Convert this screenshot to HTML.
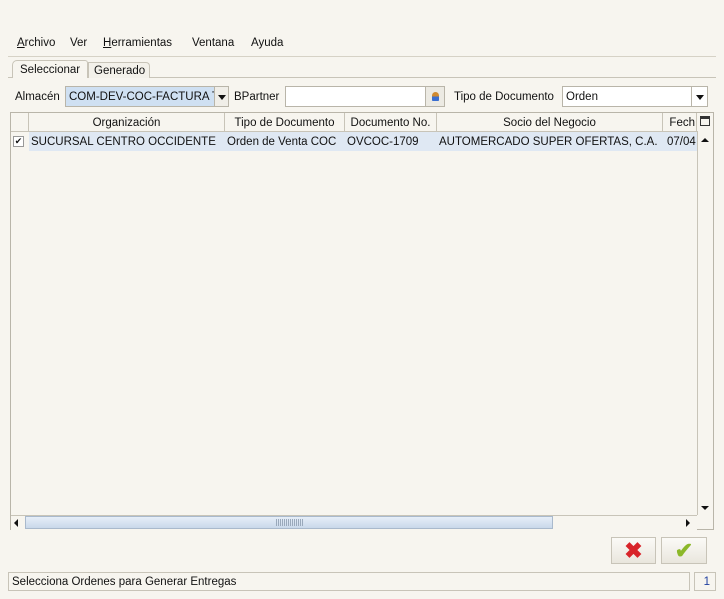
<!DOCTYPE html>
<html><head><meta charset="utf-8"><style>
*{box-sizing:border-box;margin:0;padding:0}
body{width:724px;height:599px;background:#f7f5ef;font-family:"Liberation Sans",sans-serif;font-size:11.5px;line-height:16px;color:#111;position:relative;overflow:hidden}
.a{position:absolute;white-space:nowrap}
.hdr{position:absolute;top:113px;height:19px;border-right:1px solid #c8c4b8;border-bottom:1px solid #c8c4b8;text-align:center;line-height:20px;background:#f7f5ef}
.cell{position:absolute;top:132px;height:19px;line-height:19px;background:#dfe8f3}
</style></head><body>
<div class="a" style="left:8px;top:30px;width:708px;height:27px;border-bottom:1px solid #d6d2c6"></div>
<div class="a" style="left:17px;top:35px"><u>A</u>rchivo</div>
<div class="a" style="left:70px;top:35px">Ver</div>
<div class="a" style="left:103px;top:35px"><u>H</u>erramientas</div>
<div class="a" style="left:192px;top:35px">Ventana</div>
<div class="a" style="left:251px;top:35px">Ayuda</div>
<!-- tabs -->
<div class="a" style="left:8px;top:77px;width:708px;height:1px;background:#c8c4b8"></div>
<div class="a" style="left:12px;top:60px;width:76px;height:18px;border:1px solid #c8c4b8;border-bottom:none;border-radius:5px 3px 0 0;background:#f7f5ef;padding:1px 0 0 7px">Seleccionar</div>
<div class="a" style="left:88px;top:62px;width:62px;height:16px;border:1px solid #c8c4b8;border-bottom:none;border-radius:0 4px 0 0;background:#f3f1ea;padding:0 0 0 5px">Generado</div>
<!-- filters -->
<div class="a" style="left:15px;top:89px">Almacén</div>
<div class="a" style="left:65px;top:86px;width:150px;height:21px;border:1px solid #b9b5a9;background:#cfe0f2;padding:2px 0 0 3px;overflow:hidden">COM-DEV-COC-FACTURA T</div>
<div class="a" style="left:214px;top:86px;width:15px;height:21px;border:1px solid #b9b5a9;background:#f0eee8"><div style="margin:8px auto 0;width:0;height:0;border-left:4px solid transparent;border-right:4px solid transparent;border-top:5px solid #111"></div></div>
<div class="a" style="left:234px;top:89px">BPartner</div>
<div class="a" style="left:285px;top:86px;width:141px;height:21px;border:1px solid #b9b5a9;background:#fff"></div>
<div class="a" style="left:425px;top:86px;width:20px;height:21px;border:1px solid #b9b5a9;background:#eceae3"><div style="position:absolute;left:6px;top:5px;width:7px;height:9px;border-radius:4px 4px 1px 1px;background:linear-gradient(#d08a30 50%,#3a6ed0 50%)"></div></div>
<div class="a" style="left:454px;top:89px">Tipo de Documento</div>
<div class="a" style="left:562px;top:86px;width:130px;height:21px;border:1px solid #b9b5a9;background:#fff;padding:2px 0 0 3px">Orden</div>
<div class="a" style="left:691px;top:86px;width:17px;height:21px;border:1px solid #b9b5a9;background:#fff"><div style="margin:8px auto 0;width:0;height:0;border-left:4px solid transparent;border-right:4px solid transparent;border-top:5px solid #111"></div></div>
<!-- table -->
<div class="a" style="left:10px;top:112px;width:704px;height:418px;border:1px solid #b9b5a9;background:#f7f5ef"></div>
<div class="hdr" style="left:11px;width:18px"></div>
<div class="hdr" style="left:29px;width:196px">Organización</div>
<div class="hdr" style="left:225px;width:120px">Tipo de Documento</div>
<div class="hdr" style="left:345px;width:92px">Documento No.</div>
<div class="hdr" style="left:437px;width:226px">Socio del Negocio</div>
<div class="hdr" style="left:663px;width:34px;text-align:right;padding-right:1px;overflow:hidden">Fech</div>
<div class="a" style="left:700px;top:116px;width:10px;height:10px;border:1px solid #333;border-top-width:3px"></div>
<div class="a" style="left:13px;top:136px;width:11px;height:11px;border:1px solid #999;background:#fff;font-size:9px;line-height:9px;text-align:center">&#10004;</div>
<div class="cell" style="left:29px;width:668px"></div>
<div class="a" style="left:31px;top:134px">SUCURSAL CENTRO OCCIDENTE</div>
<div class="a" style="left:227px;top:134px">Orden de Venta COC</div>
<div class="a" style="left:347px;top:134px">OVCOC-1709</div>
<div class="a" style="left:439px;top:134px">AUTOMERCADO SUPER OFERTAS, C.A.</div>
<div class="a" style="left:667px;top:134px">07/04</div>
<!-- vscroll -->
<div class="a" style="left:697px;top:131px;width:16px;height:384px;border-left:1px solid #c8c4b8;background:#f7f5ef"></div>
<div class="a" style="left:701px;top:138px;width:0;height:0;border-left:4px solid transparent;border-right:4px solid transparent;border-bottom:4px solid #111"></div>
<div class="a" style="left:701px;top:506px;width:0;height:0;border-left:4px solid transparent;border-right:4px solid transparent;border-top:4px solid #111"></div>
<!-- hscroll -->
<div class="a" style="left:11px;top:515px;width:686px;height:15px;border-top:1px solid #c8c4b8;background:#f7f5ef"></div>
<div class="a" style="left:14px;top:519px;width:0;height:0;border-top:4px solid transparent;border-bottom:4px solid transparent;border-right:4px solid #111"></div>
<div class="a" style="left:25px;top:516px;width:528px;height:13px;border:1px solid #a9b9cc;background:linear-gradient(#e6eef8,#c9d8ea)"></div>
<div class="a" style="left:276px;top:519px;width:28px;height:7px;background:repeating-linear-gradient(90deg,#9aa9bb 0 1px,transparent 1px 2px)"></div>
<div class="a" style="left:686px;top:519px;width:0;height:0;border-top:4px solid transparent;border-bottom:4px solid transparent;border-left:4px solid #111"></div>
<!-- buttons -->
<div class="a" style="left:611px;top:537px;width:45px;height:27px;border:1px solid #c8c4b8;background:linear-gradient(#fbfaf7,#e9e6dd);text-align:center;color:#d8242a;font-size:22px;line-height:26px;font-weight:bold">&#10006;</div>
<div class="a" style="left:661px;top:537px;width:46px;height:27px;border:1px solid #c8c4b8;background:linear-gradient(#fbfaf7,#e9e6dd);text-align:center;color:#8cb82a;font-size:22px;line-height:26px;font-weight:bold">&#10004;</div>
<!-- status -->
<div class="a" style="left:8px;top:572px;width:682px;height:19px;border:1px solid #c8c4b8;background:#f7f5ef;padding:1px 0 0 3px">Selecciona Ordenes para Generar Entregas</div>
<div class="a" style="left:694px;top:572px;width:22px;height:19px;border:1px solid #c8c4b8;text-align:right;padding:1px 5px 0 0;color:#2040a0">1</div>
</body></html>
